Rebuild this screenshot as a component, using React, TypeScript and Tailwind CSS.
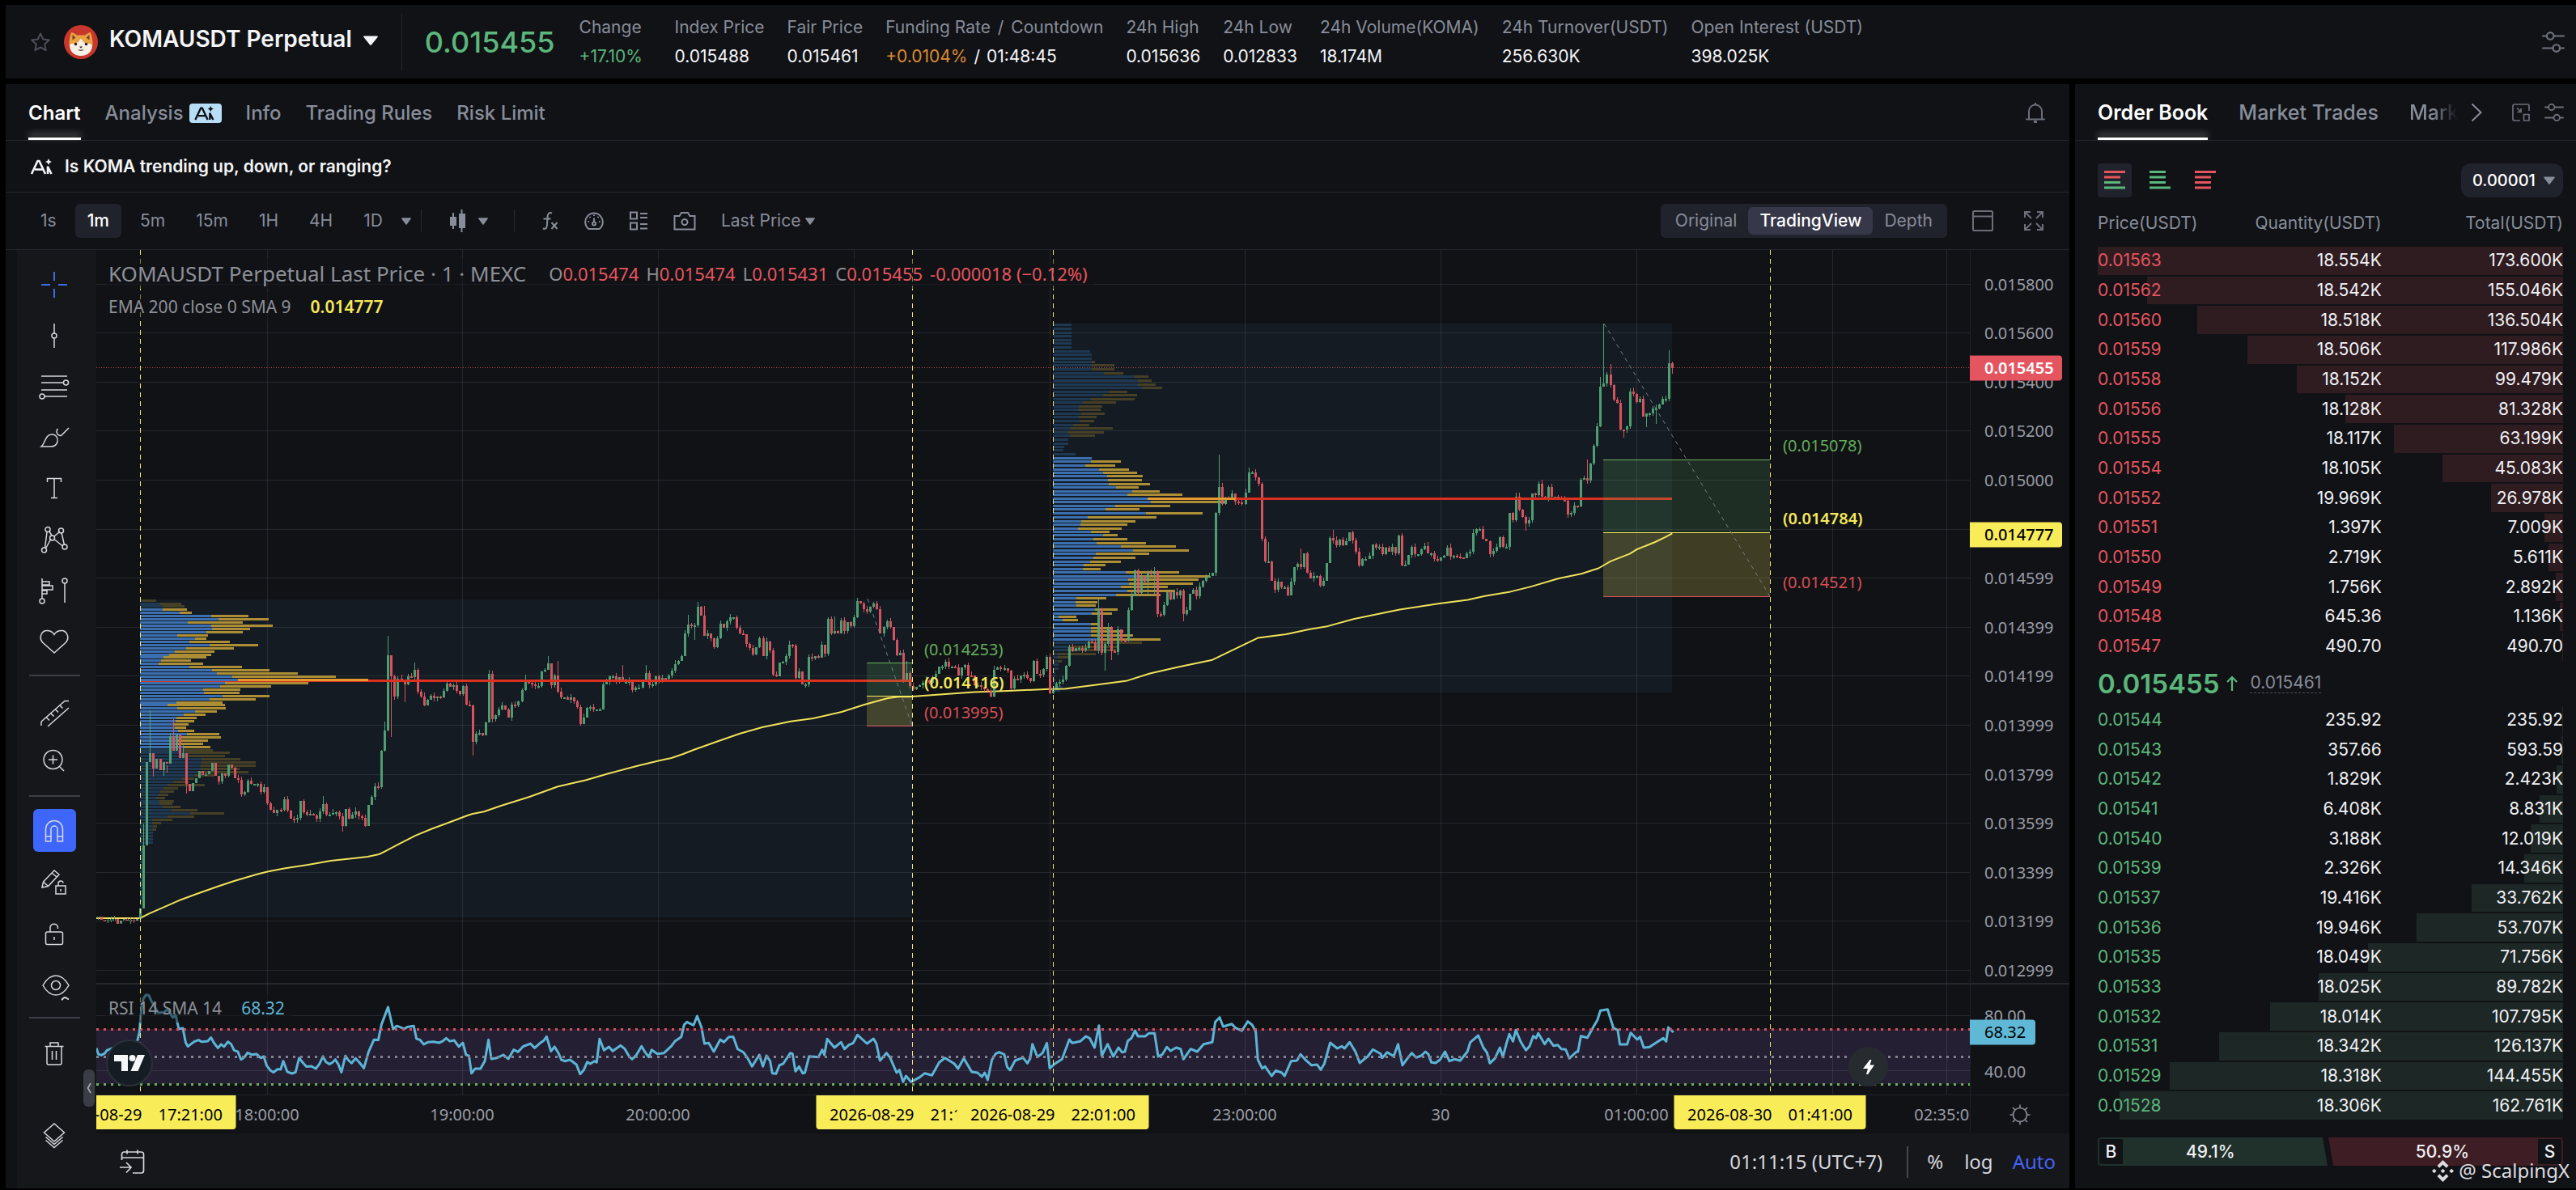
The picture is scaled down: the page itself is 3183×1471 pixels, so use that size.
import React from "react";

/* ------------------------------------------------------------------ */
/* Chart geometry                                                      */
/* ------------------------------------------------------------------ */

const VIEW = { x: 119, y: 309, w: 2315, h: 1044 };
const leftPct = (x: number) => `${((x - VIEW.x) / VIEW.w) * 100}%`;
const topPct = (y: number) => `${((y - VIEW.y) / VIEW.h) * 100}%`;

type Pt = [number, number];

/** Turns a flat list of pane units into chart points. */
const series = (ox: number, oy: number, sx: number, sy: number, flat: number[]): Pt[] => {
  const out: Pt[] = [];
  for (let i = 0; i < flat.length; i += 2) out.push([ox + flat[i] / sx, oy + flat[i + 1] / sy]);
  return out;
};

const SX = 1.4255;

const closes: Pt[] = [
  ...series(100, 700, SX, 3, [
    27, 1300, 33, 1312, 39, 1315, 45, 1310, 51, 1309, 57, 1308, 62, 1309, 65, 1325, 69, 1315, 75, 1308, 80, 1312, 86, 1312, 92, 1315, 98, 1308,
    104, 1270, 110, 1034, 116, 726, 122, 693, 128, 750, 133, 714, 139, 757, 145, 727, 151, 732, 157, 630, 162, 683, 168, 625, 174, 710, 180, 694,
    185, 806, 191, 833, 197, 804, 203, 786, 209, 760, 215, 773, 220, 770, 226, 760, 231, 730, 237, 778, 243, 797, 249, 768, 255, 778, 261, 735,
    267, 748, 270, 785, 276, 793, 282, 845, 288, 836, 294, 796, 300, 808, 306, 808, 312, 808, 318, 836, 324, 820, 330, 880, 336, 904, 341, 915,
    347, 902, 353, 903, 359, 865, 365, 906, 371, 935, 376, 938, 382, 932, 387, 870, 393, 912, 399, 922, 405, 918, 411, 925, 417, 937, 422, 910,
    427, 882, 433, 922, 439, 922, 445, 915, 451, 912, 456, 928, 462, 962, 468, 900, 474, 937, 479, 922, 485, 909, 491, 928, 497, 934, 503, 962,
    508, 885, 514, 855, 519, 815, 525, 818, 531, 683, 537, 610, 542, 330, 548, 408, 553, 482, 559, 417, 565, 422, 571, 438, 577, 407, 582, 410,
    588, 384, 593, 465, 599, 483, 605, 515, 611, 495, 617, 480, 622, 490, 628, 484, 634, 485, 640, 462, 645, 435, 651, 447, 657, 442, 663, 462,
    669, 474, 675, 445, 680, 513, 686, 515, 692, 650, 698, 620, 704, 618, 710, 626, 715, 580, 721, 400, 726, 566, 732, 552, 738, 530, 743, 517,
    749, 531, 755, 560, 761, 514, 767, 515, 773, 500, 778, 460, 784, 430, 790, 432, 796, 438, 802, 445, 808, 420, 812, 390, 818, 385, 823, 360,
    829, 440, 835, 405, 841, 465, 846, 487, 852, 487, 858, 495, 864, 487, 870, 500, 875, 522, 881, 584, 887, 560, 893, 525, 899, 522, 905, 530,
    911, 530, 917, 370, 922, 438, 928, 430, 934, 408, 940, 430, 946, 410, 951, 400, 957, 428, 963, 425, 969, 458, 974, 472, 980, 450, 986, 428,
    992, 397, 998, 440, 1004, 437, 1009, 408, 1015, 430, 1021, 415, 1030, 418, 1036, 404, 1041, 388, 1047, 362, 1053, 350, 1058, 333, 1064, 248,
    1070, 216, 1075, 222, 1081, 220, 1087, 150, 1093, 182, 1098, 257, 1104, 250, 1110, 268, 1116, 299, 1122, 268, 1127, 214, 1133, 228, 1139, 205,
    1145, 190, 1150, 188, 1156, 228, 1162, 250, 1168, 253, 1174, 288, 1180, 302, 1185, 326, 1191, 300, 1197, 267, 1202, 334, 1208, 278, 1214, 311,
    1220, 402, 1226, 407, 1231, 358, 1237, 355, 1243, 333, 1249, 290, 1255, 295, 1260, 415, 1266, 390, 1272, 437, 1278, 437, 1284, 337, 1289, 343,
    1295, 334, 1301, 340, 1307, 292, 1313, 323, 1318, 195, 1324, 248, 1330, 240, 1335, 248, 1341, 200, 1347, 240, 1352, 208, 1358, 222, 1363, 190,
    1369, 130, 1375, 138, 1381, 160, 1386, 167, 1392, 150, 1398, 138, 1404, 160, 1409, 250, 1415, 225, 1421, 204, 1427, 225, 1433, 272, 1438, 330,
    1444, 322, 1450, 420, 1456, 397, 1460, 445,
  ]),
  ...series(1000, 380, SX, 2.8, [
    181, 1322, 187, 1312, 193, 1308, 199, 1300, 205, 1290, 211, 1298, 217, 1280, 223, 1268, 229, 1243, 235, 1243, 241, 1226, 247, 1244, 253, 1244,
    258, 1246, 264, 1274, 270, 1245, 276, 1238, 282, 1274, 288, 1275, 294, 1307, 300, 1314, 306, 1322, 312, 1328, 318, 1346, 322, 1296, 328, 1255,
    334, 1246, 340, 1248, 346, 1258, 352, 1320, 358, 1322, 362, 1285, 368, 1288, 374, 1275, 380, 1270, 385, 1281, 391, 1294, 397, 1224, 402, 1268,
    408, 1270, 414, 1252, 420, 1210, 425, 1335, 430, 1320, 436, 1302, 442, 1297, 448, 1288, 454, 1240, 460, 1175, 466, 1190, 472, 1178, 478, 1186,
    484, 1178, 490, 1155, 496, 1158, 500, 1192, 506, 1188, 510, 1042, 516, 1195, 522, 1165, 528, 1105, 534, 1190, 539, 1192, 545, 1115, 551, 1150,
    557, 1153, 563, 1048, 568, 1000, 573, 910, 579, 988, 585, 930, 591, 950, 597, 915, 603, 925, 609, 912, 614, 1060, 620, 1063, 626, 1030, 632, 985,
    638, 1012, 644, 985, 650, 998, 655, 980, 660, 1061, 666, 1047, 672, 990, 678, 976, 684, 1000, 690, 965, 695, 947, 701, 932, 707, 930, 713, 918,
    717, 712, 723, 622, 729, 680, 735, 658, 741, 663, 747, 645, 753, 672, 758, 675, 764, 680, 769, 640, 774, 572, 780, 572, 786, 588, 790, 610,
    794, 802, 800, 880, 806, 880, 811, 945, 817, 978, 823, 948, 829, 968, 835, 968, 840, 996, 846, 948, 851, 900, 857, 888, 863, 900, 869, 850,
    875, 918, 880, 920, 884, 937, 890, 930, 896, 930, 902, 962, 907, 945, 912, 885, 918, 798, 924, 807, 930, 823, 936, 803, 942, 822, 947, 808,
    952, 778, 958, 806, 964, 845, 970, 892, 975, 870, 981, 870, 987, 860, 993, 820, 999, 832, 1005, 830, 1010, 855, 1016, 832, 1022, 845, 1028, 830,
    1034, 850, 1040, 790, 1045, 892, 1051, 890, 1057, 858, 1063, 830, 1069, 855, 1075, 830, 1080, 838, 1086, 825, 1092, 850, 1098, 870, 1104, 875,
    1110, 865, 1115, 860, 1121, 832, 1127, 862, 1133, 860, 1139, 862, 1145, 866, 1150, 868, 1156, 850, 1162, 845, 1166, 790, 1172, 782, 1178, 768,
    1184, 770, 1189, 800, 1195, 810, 1200, 853, 1206, 842, 1212, 830, 1218, 796, 1224, 830, 1230, 795, 1235, 712, 1240, 735, 1246, 655, 1252, 700,
    1257, 725, 1263, 747, 1269, 735, 1275, 645, 1281, 650, 1287, 610, 1293, 655, 1298, 660, 1304, 622, 1310, 655, 1316, 660, 1322, 665, 1328, 668,
    1333, 675, 1338, 716, 1344, 712, 1350, 686, 1356, 690, 1360, 595, 1366, 590, 1372, 598, 1378, 540, 1384, 480, 1390, 412, 1395, 275, 1401, 262,
    1407, 232, 1412, 268, 1418, 318, 1424, 330, 1430, 422, 1436, 424, 1441, 412, 1447, 290, 1453, 300, 1459, 328, 1464, 315, 1470, 378, 1476, 368,
    1482, 368, 1488, 350, 1494, 335, 1500, 315, 1506, 300, 1510, 315, 1515, 193, 1520, 210,
  ]),
];

/* Long wicks: each pair is a time position and the extreme that it reached. */
const extremes: Pt[] = [
  ...series(100, 700, SX, 3, [
    110, 955, 122, 535, 128, 780, 145, 778, 157, 618, 151, 765, 162, 568, 180, 655, 185, 842, 376, 950, 427, 852, 462, 983, 537, 577, 531, 728,
    542, 258, 548, 632, 553, 493, 571, 505, 588, 358, 692, 702, 721, 383, 784, 402, 823, 333, 841, 350, 881, 590, 957, 367, 992, 367, 1070, 180,
    1081, 272, 1087, 132, 1098, 148, 1145, 178, 1330, 185, 1456, 350,
  ]),
  ...series(1000, 380, SX, 2.8, [
    318, 1350, 510, 1012, 522, 1257, 534, 1222, 579, 992, 597, 998, 609, 998, 660, 1085, 723, 510, 774, 553, 786, 566, 806, 812, 863, 833, 924, 770,
    1246, 640, 1263, 772, 1372, 525, 1395, 240, 1401, 56, 1412, 197, 1436, 450, 1476, 415, 1492, 403, 1515, 147, 1520, 230,
  ]),
];

const STEP = 4.027;

type Candle = { x: number; open: number; close: number; high: number; low: number };

const candles: Candle[] = (() => {
  const out: Candle[] = [];
  let k = 0;
  let prev = closes[0][1];
  for (let i = -52; ; i++) {
    const x = 330.4 + i * STEP;
    if (x > 2068) break;
    while (k < closes.length - 1 && Math.abs(closes[k + 1][0] - x) <= Math.abs(closes[k][0] - x)) k++;
    const close = closes[k][1];
    const wickUp = ((i * 37 + 400) % 7) * 0.8;
    const wickDown = ((i * 53 + 800) % 6) * 0.8;
    let high = Math.min(prev, close) - wickUp;
    let low = Math.max(prev, close) + wickDown;
    for (const [ex, ey] of extremes) {
      if (Math.abs(ex - x) < STEP / 2) {
        if (ey < high) high = ey;
        if (ey > low) low = ey;
      }
    }
    out.push({ x, open: prev, close, high, low });
    prev = close;
  }
  return out;
})();

const candlePath = (up: boolean) =>
  candles
    .filter((c) => c.close <= c.open === up)
    .map((c) => {
      const x = Math.round(c.x);
      const t = Math.round(Math.min(c.open, c.close));
      const b = Math.max(t + 2, Math.round(Math.max(c.open, c.close)));
      const h = Math.round(c.high);
      const l = Math.round(c.low);
      return `M${x - 1} ${t}h3V${b}h-3zM${x} ${h}h1V${l}h-1z`;
    })
    .join("");

const ema: Pt[] = [
  ...series(100, 700, SX, 3, [
    27, 1305, 104, 1305, 120, 1288, 172, 1240, 200, 1218, 240, 1188, 270, 1167, 310, 1142, 330, 1132, 360, 1120, 400, 1107, 440, 1092, 480, 1083,
    505, 1077, 525, 1068, 535, 1058, 560, 1030, 590, 998, 620, 972, 650, 949, 680, 925, 690, 918, 710, 910, 740, 888, 790, 855, 840, 817, 890, 793,
    930, 768, 980, 740, 1020, 720, 1040, 711, 1060, 697, 1080, 680, 1120, 650, 1160, 621, 1200, 597, 1250, 575, 1290, 564, 1340, 540, 1380, 513,
    1420, 490, 1440, 484, 1460, 484,
  ]),
  ...series(1000, 380, SX, 2.8, [
    181, 1347, 230, 1340, 290, 1331, 350, 1327, 423, 1321, 450, 1320, 500, 1308, 560, 1292, 600, 1267, 650, 1245, 710, 1220, 750, 1182, 790, 1144,
    840, 1131, 880, 1114, 910, 1105, 960, 1078, 1040, 1046, 1110, 1025, 1160, 1012, 1190, 999, 1235, 984, 1270, 967, 1320, 938, 1360, 922, 1390, 903,
    1412, 878, 1445, 853, 1457, 838, 1490, 812, 1508, 795, 1520, 782,
  ]),
];

const rsi: Pt[] = [
  ...series(0, 880, 2.24, 2.653, [
    267, 1103, 272, 1122, 280, 1126, 290, 1120, 296, 1110, 310, 1103, 340, 1095, 380, 1080, 386, 1050, 390, 990, 397, 940, 404, 928, 412, 930,
    420, 950, 430, 972, 438, 987, 455, 985, 463, 975, 470, 985, 478, 1002, 486, 995, 495, 1040, 506, 1037, 514, 1085, 520, 1097, 530, 1088, 540, 1080,
    550, 1076, 558, 1082, 575, 1080, 584, 1068, 592, 1085, 603, 1102, 612, 1090, 620, 1098, 631, 1082, 640, 1090, 648, 1110, 658, 1114, 667, 1140,
    677, 1132, 685, 1118, 697, 1124, 710, 1122, 722, 1135, 730, 1130, 738, 1160, 748, 1175, 757, 1182, 768, 1172, 777, 1172, 784, 1145, 795, 1180,
    808, 1186, 818, 1182, 828, 1135, 838, 1150, 848, 1163, 862, 1162, 874, 1170, 884, 1155, 894, 1130, 902, 1148, 912, 1155, 920, 1150, 928, 1140,
    936, 1155, 945, 1182, 956, 1128, 964, 1142, 973, 1152, 984, 1136, 995, 1150, 1007, 1168, 1020, 1115, 1035, 1075, 1047, 1076, 1056, 1025,
    1074, 968, 1088, 1040, 1098, 1030, 1110, 1035, 1118, 1040, 1128, 1033, 1145, 1030, 1153, 1072, 1162, 1075, 1173, 1090, 1185, 1083, 1200, 1082,
    1215, 1085, 1225, 1080, 1235, 1070, 1245, 1080, 1257, 1077, 1270, 1098, 1281, 1085, 1290, 1125, 1298, 1128, 1305, 1185, 1315, 1170, 1330, 1170,
    1342, 1145, 1352, 1075, 1360, 1138, 1375, 1135, 1393, 1125, 1407, 1138, 1422, 1108, 1434, 1115, 1448, 1097, 1468, 1088, 1480, 1102, 1495, 1086,
    1505, 1078, 1513, 1065, 1525, 1113, 1535, 1098,
  ]),
  ...series(690, 1200, 1.12, 3, [
    0, 305, 4, 330, 9, 335, 16, 330, 25, 348, 30, 383, 35, 368, 40, 338, 44, 345, 50, 335, 53, 340, 57, 253, 63, 295, 70, 282, 75, 298, 86, 277,
    92, 290, 98, 318, 102, 328, 108, 312, 115, 280, 120, 302, 125, 320, 129, 293, 137, 308, 146, 305, 156, 280, 161, 262, 170, 245, 174, 200,
    178, 190, 187, 202, 192, 168, 198, 210, 202, 270, 208, 268, 215, 300, 224, 255, 229, 265, 236, 245, 242, 245, 248, 290, 256, 302, 262, 325,
    268, 355, 278, 312, 283, 355, 288, 315, 293, 335, 296, 380, 301, 382, 306, 350, 311, 345, 321, 305, 324, 308, 328, 373, 333, 355, 338, 380,
    341, 378, 347, 317, 360, 320, 365, 293, 368, 312, 372, 253, 382, 285, 391, 265, 396, 290, 402, 275, 408, 268, 414, 238, 427, 270, 436, 252,
    440, 270, 445, 333, 454, 305, 459, 322, 468, 378, 472, 368, 477, 412, 481, 390, 488, 412, 500, 395, 507, 380, 517, 388, 527, 340, 535, 323,
    548, 345, 553, 363, 561, 325, 572, 375, 580, 378, 586, 393, 590, 378, 594, 405, 600, 330, 605, 308, 610, 302, 617, 310, 621, 357, 625, 368,
    632, 333, 643, 322, 649, 343, 653, 325, 656, 272, 663, 320, 670, 305, 676, 268, 680, 362, 687, 345, 697, 328, 707, 255, 711, 268, 722, 262,
    730, 243, 735, 250, 742, 285, 748, 203, 752, 315, 760, 272, 768, 318, 775, 285, 780, 302, 784, 300, 788, 260, 793, 250, 798, 222, 802, 243,
    812, 243, 817, 232, 825, 232, 830, 318, 836, 310, 842, 283, 847, 297, 855, 285, 861, 290, 865, 328, 875, 290, 884, 300, 893, 272, 905, 265,
    909, 190, 915, 173, 920, 207, 932, 197, 937, 212, 946, 222, 954, 188, 960, 200, 965, 225, 968, 330, 974, 362, 978, 355, 987, 390, 993, 370,
    1001, 378, 1005, 390, 1014, 335, 1022, 333, 1027, 310, 1033, 328, 1042, 350, 1050, 348, 1055, 367, 1060, 345, 1068, 267, 1078, 288, 1084, 280,
    1088, 288, 1095, 265, 1103, 300, 1109, 342, 1115, 328, 1120, 318, 1127, 292, 1138, 308, 1140, 323, 1147, 302, 1156, 317, 1162, 272, 1168, 350,
    1175, 325, 1181, 305, 1187, 322, 1194, 315, 1200, 300, 1204, 310, 1208, 340, 1214, 342, 1220, 330, 1227, 300, 1233, 335, 1240, 328, 1248, 333,
    1258, 300, 1262, 265, 1273, 240, 1280, 285, 1285, 303, 1289, 343, 1296, 325, 1303, 285, 1307, 320, 1312, 270, 1316, 235, 1321, 262, 1325, 220,
    1332, 265, 1339, 295, 1344, 280, 1349, 242, 1353, 250, 1356, 232, 1365, 272, 1370, 252, 1377, 278, 1383, 275, 1388, 290, 1394, 292, 1399, 325,
    1409, 300, 1411, 300, 1415, 242, 1424, 248, 1433, 205, 1438, 182, 1442, 148, 1452, 143, 1460, 212, 1466, 220, 1469, 273, 1479, 273, 1484, 230,
    1493, 255, 1497, 245, 1502, 285, 1510, 283, 1522, 262, 1529, 250, 1533, 262, 1536, 210, 1543, 228,
  ]),
];

const toPoints = (pts: Pt[]) => pts.map(([x, y]) => `${x.toFixed(1)},${y.toFixed(1)}`).join(" ");

/* Volume profile rows: [row, end of the buy part, end of the sell part]. */
type Row = [number, number, number];

const rowsOf = (flat: number[]): Row[] => {
  const out: Row[] = [];
  for (let i = 0; i < flat.length; i += 3) out.push([flat[i], flat[i + 1], flat[i + 2]]);
  return out;
};

const profileA = rowsOf([
  127, 108, 133, 138, 138, 177, 148, 144, 182, 160, 144, 187, 172, 174, 195, 184, 229, 295, 196, 242, 331, 208, 188, 285, 220, 229, 338,
  232, 231, 298, 244, 221, 285, 256, 170, 224, 268, 201, 221, 280, 191, 262, 292, 227, 312, 304, 185, 269, 316, 165, 235, 327, 155, 229,
  337, 145, 221, 349, 141, 194, 361, 137, 215, 373, 191, 284, 385, 231, 332, 397, 239, 382, 409, 267, 449, 421, 277, 506, 433, 254, 401,
  445, 245, 335, 457, 215, 281, 469, 217, 279, 481, 249, 332, 493, 227, 308, 504, 168, 249, 514, 153, 254, 526, 170, 255, 538, 201, 239,
  550, 181, 220, 562, 168, 204, 574, 167, 200, 586, 162, 190, 598, 165, 185, 610, 171, 200, 622, 187, 244, 634, 174, 247, 646, 168, 224,
  658, 168, 215, 670, 180, 228, 682, 180, 232, 691, 185, 262, 703, 190, 254, 715, 213, 281, 727, 213, 308, 739, 211, 308, 751, 211, 279,
  763, 205, 295, 775, 200, 235, 787, 178, 200, 799, 163, 190, 811, 153, 218, 823, 146, 171, 835, 140, 164, 847, 137, 154, 859, 133, 148,
  870, 138, 164, 880, 138, 161, 892, 144, 175, 904, 160, 205, 916, 192, 252, 928, 153, 200, 940, 126, 161, 952, 126, 141, 964, 127, 134,
  976, 126, 133, 988, 127, 127, 1000, 127, 127, 1012, 127, 127, 1024, 127, 127, 1036, 109, 109, 1048, 109, 109, 1060, 109, 109, 1072, 109, 109,
  1084, 109, 109, 1096, 109, 109, 1108, 109, 109, 1120, 109, 109, 1132, 109, 109, 1144, 109, 109, 1156, 109, 109, 1168, 109, 109, 1180, 109, 109,
  1192, 109, 109, 1204, 109, 109, 1216, 109, 109, 1228, 109, 109, 1240, 109, 109,
]);

const profileB = rowsOf([
  60, 462, 462, 73, 462, 462, 86, 462, 462, 98, 462, 462, 111, 462, 462, 124, 462, 462, 137, 462, 462, 150, 495, 495, 162, 497, 497,
  175, 497, 497, 187, 497, 503, 200, 497, 537, 213, 497, 537, 226, 519, 553, 239, 573, 597, 252, 579, 603, 265, 579, 610, 277, 586, 621,
  290, 527, 560, 302, 517, 577, 315, 496, 573, 328, 482, 540, 341, 475, 516, 353, 473, 513, 366, 479, 520, 379, 475, 506, 392, 476, 502,
  405, 465, 493, 417, 459, 535, 431, 455, 519, 443, 459, 503, 456, 456, 456, 469, 456, 456, 482, 449, 449, 494, 448, 448, 506, 469, 469,
  520, 497, 497, 533, 496, 549, 546, 486, 539, 559, 510, 563, 571, 517, 577, 583, 525, 587, 596, 526, 586, 609, 527, 600, 621, 540, 580,
  635, 569, 617, 648, 560, 657, 660, 596, 751, 673, 602, 735, 686, 539, 636, 698, 522, 582, 711, 593, 693, 725, 490, 612, 738, 479, 574,
  750, 478, 560, 763, 473, 550, 775, 496, 529, 788, 517, 543, 800, 500, 560, 814, 506, 593, 827, 549, 646, 840, 570, 669, 852, 505, 599,
  865, 500, 574, 878, 495, 549, 890, 483, 522, 903, 482, 513, 915, 557, 651, 930, 577, 706, 942, 562, 686, 954, 563, 676, 967, 549, 631,
  980, 560, 644, 993, 540, 619, 1006, 470, 523, 1019, 469, 507, 1031, 470, 505, 1044, 503, 543, 1057, 497, 533, 1069, 439, 470, 1082, 446, 473,
  1094, 496, 510, 1108, 496, 531, 1121, 496, 553, 1133, 496, 570, 1147, 510, 619, 1159, 490, 586, 1172, 456, 545, 1185, 453, 540,
  1197, 438, 505, 1210, 438, 457, 1223, 438, 445, 1236, 439, 439, 1249, 439, 439, 1262, 433, 433, 1275, 434, 434, 1288, 434, 434,
  1300, 434, 434, 1313, 446, 446, 1325, 442, 442,
]);

function Profile(props: { rows: Row[]; ox: number; oy: number; sy: number; from: number; valueArea: [number, number] }) {
  const { rows, ox, oy, sy, from, valueArea } = props;
  const start = Math.round(ox + from / SX);
  return (
    <g shapeRendering="crispEdges">
      {rows.map(([r, buy, sell]) => {
        const inside = r >= valueArea[0] && r <= valueArea[1];
        const y = Math.round(oy + r / sy) - 1;
        const b = Math.round(ox + buy / SX);
        const s = Math.round(ox + sell / SX);
        return (
          <g key={r}>
            <rect x={start} y={y} width={b - start} height={3} fill={inside ? "#3b6fb0" : "#1e3852"} />
            {s > b && <rect x={b} y={y} width={s - b} height={3} fill={inside ? "#ad8e35" : "#453f26"} />}
          </g>
        );
      })}
    </g>
  );
}

const gridY = Array.from({ length: 15 }, (_, i) => 350.5 + i * 60.6);
const gridX = [330, 571, 813, 1055, 1297, 1538, 1780, 2022, 2264, 2405];
const marks = [173, 1127, 1301, 2187];

function ChartDrawing() {
  return (
    <svg className="absolute inset-0 h-full w-full" viewBox="119 309 2315 1044" preserveAspectRatio="none" aria-hidden="true">
      <rect x="119" y="1272" width="2315" height="68" fill="#251f34" />
      <rect x="173" y="741" width="954" height="393" fill="#141b22" />
      <rect x="1301" y="400" width="765" height="456" fill="#141b22" />
      <g shapeRendering="crispEdges" fill="#9aa4b8" fillOpacity="0.15">
        {gridY.map((y) => (
          <rect key={y} x="119" y={Math.round(y)} width="2315" height="1" />
        ))}
        {gridX.map((x) => (
          <rect key={x} x={x} y="309" width="1" height="1044" />
        ))}
        <rect x="119" y="1255" width="2315" height="1" />
        <rect x="119" y="1323" width="2315" height="1" />
        <rect x="119" y="1215" width="2315" height="2" />
      </g>
      <line x1="119" x2="2434" y1="454.5" y2="454.5" stroke="#e5555f" strokeOpacity="0.8" strokeDasharray="1 2" />
      <Profile rows={profileA} ox={100} oy={700} sy={3} from={104} valueArea={[155, 675]} />
      <Profile rows={profileB} ox={1000} oy={380} sy={2.8} from={429} valueArea={[515, 1150]} />
      <polyline points={toPoints(ema)} fill="none" stroke="#efe15a" strokeWidth="2" strokeLinejoin="round" />
      <g shapeRendering="crispEdges">
        <path d={candlePath(true)} fill="#52a578" fillOpacity="0.95" />
        <path d={candlePath(false)} fill="#de5663" fillOpacity="0.95" />
      </g>
      <g shapeRendering="crispEdges" fill="#dc3120">
        <rect x="455" y="840" width="672" height="3" />
        <rect x="173" y="842" width="282" height="1" />
        <rect x="1527" y="615" width="539" height="3" />
      </g>
      <g shapeRendering="crispEdges" fill="#e49a2c">
        <rect x="294" y="839" width="161" height="3" />
        <rect x="1418" y="615" width="109" height="3" />
      </g>
      <g shapeRendering="crispEdges">
        <rect x="1071" y="819" width="56" height="42" fill="#64b464" fillOpacity="0.18" />
        <rect x="1071" y="861" width="56" height="36" fill="#f9ec59" fillOpacity="0.2" />
        <rect x="1071" y="819" width="56" height="1" fill="#69b05c" />
        <rect x="1071" y="860" width="56" height="1" fill="#f9ec59" />
        <rect x="1071" y="897" width="56" height="1" fill="#d94f55" />
        <rect x="1981" y="568" width="206" height="90" fill="#64b464" fillOpacity="0.18" />
        <rect x="1981" y="658" width="206" height="79" fill="#f9ec59" fillOpacity="0.2" />
        <rect x="1981" y="568" width="206" height="1" fill="#69b05c" />
        <rect x="1981" y="658" width="206" height="1" fill="#f9ec59" />
        <rect x="1981" y="737" width="206" height="1" fill="#d94f55" />
      </g>
      <g stroke="#787b86" strokeDasharray="5 5" fill="none">
        <line x1="1072" y1="740" x2="1127" y2="897" />
        <line x1="1982" y1="400" x2="2187" y2="737" />
      </g>
      <polyline points={toPoints(rsi)} fill="none" stroke="#5cb5d6" strokeWidth="3" strokeLinejoin="round" />
      <g strokeWidth="3" strokeDasharray="3 6">
        <line x1="119" x2="2434" y1="1272.5" y2="1272.5" stroke="#de4f55" />
        <line x1="119" x2="2434" y1="1306.5" y2="1306.5" stroke="#85838f" />
        <line x1="119" x2="2434" y1="1340.5" y2="1340.5" stroke="#6cb05a" />
      </g>
      <g stroke="#f3ea72" strokeDasharray="6 5" shapeRendering="crispEdges">
        {marks.map((x) => (
          <line key={x} x1={x + 0.5} x2={x + 0.5} y1="309" y2="1353" />
        ))}
      </g>
    </svg>
  );
}

/* ------------------------------------------------------------------ */
/* Icons                                                               */
/* ------------------------------------------------------------------ */

const Caret = ({ className = "" }: { className?: string }) => (
  <svg className={className} viewBox="0 0 12 8" preserveAspectRatio="none" fill="currentColor" aria-hidden="true">
    <path d="M.8.3h10.4c.6 0 .9.6.5 1.1L6.6 7.6c-.3.4-.9.4-1.2 0L.3 1.4C-.1.9.2.3.8.3z" />
  </svg>
);

const AiMark = ({ className = "" }: { className?: string }) => (
  <svg className={className} viewBox="0 0 30 20" fill="none" stroke="currentColor" strokeWidth="2.6" aria-hidden="true">
    <path d="M1.5 19 9 3h2l7.5 16M5.5 13.5h9.5" />
    <path d="M21.5 9.5V19M21.500 10 26 19" />
    <path d="M22.5 0l1.3 2.700L26.500 4l-2.700 1.300-1.300 2.700-1.300-2.700L18.500 4l2.700-1.300z" fill="currentColor" stroke="none" />
  </svg>
);

const Sliders = ({ className = "" }: { className?: string }) => (
  <svg className={className} viewBox="0 0 26 26" fill="none" stroke="currentColor" strokeWidth="2" strokeLinecap="round" aria-hidden="true">
    <path d="M1 6h4M14 6h11M1 20h11M21 20h4" />
    <circle cx="9.5" cy="6" r="4" />
    <circle cx="16.5" cy="20" r="4" />
  </svg>
);

const Star = () => (
  <svg className="h-7 w-7" viewBox="0 0 28 28" fill="none" stroke="#4b4e57" strokeWidth="2" strokeLinejoin="round" aria-hidden="true">
    <path d="M14 3.500l3.200 7 7.600.9-5.600 5.200 1.500 7.600L14 20.500l-6.700 3.700 1.500-7.600-5.600-5.200 7.600-.9z" />
  </svg>
);

const CoinLogo = () => (
  <svg className="h-[42px] w-[42px]" viewBox="0 0 42 42" aria-hidden="true">
    <circle cx="21" cy="21" r="21" fill="#c8372d" />
    <path d="M9 9c3 .5 5 2 7 3.500h10c2-1.500 4-3 7-3.500 1.500 5 2.500 9 2.500 14 0 8-6 13-14.500 13S6.500 31 6.500 23C6.500 18 7.500 14 9 9z" fill="#e9a243" />
    <path d="M10.500 12l4 3.500-4 3zM31.500 12l-4 3.500 4 3z" fill="#7b3f22" />
    <path d="M21 17c1.500 0 2 4 5 5s6 0 8.500 2c1.500 8-5 14-13.500 14S6 32 7.500 24c2.500-2 5.500-1 8.500-2s3.500-5 5-5z" fill="#f6efe6" />
    <circle cx="14.5" cy="23.5" r="1.8" fill="#2b1a14" />
    <circle cx="27.5" cy="23.5" r="1.8" fill="#2b1a14" />
    <path d="M19 26.500h4l-2 2.200z" fill="#2b1a14" />
    <path d="M18 30.500c1.500 1 4.500 1 6 0" fill="none" stroke="#2b1a14" />
  </svg>
);

const Bell = () => (
  <svg className="h-7 w-7" viewBox="0 0 28 28" fill="none" stroke="#6b6f79" strokeWidth="2" aria-hidden="true">
    <path d="M6 22V12.500a8 8 0 0 1 16 0V22M3 22.500h22" strokeLinecap="round" />
    <path d="M12 25.500h4" strokeWidth="3" />
    <path d="M14 2v3" />
  </svg>
);

const stroke = { fill: "none", stroke: "currentColor", strokeWidth: 2 } as const;

const CandlesIcon = () => (
  <svg className="h-7 w-[22px]" viewBox="0 0 22 28" fill="currentColor" aria-hidden="true">
    <path d="M4 4h2v5h3v11H6v4H4v-4H1V9h3zM14.500 0h2v5H20v18h-3.500v5h-2v-5H12V5h2.500z" />
  </svg>
);

const FxIcon = () => (
  <svg className="h-6 w-6" viewBox="0 0 24 24" {...stroke} aria-hidden="true">
    <path d="M15 2.500c-3.500-1.500-5 .5-5.300 4L8.800 18c-.3 3.500-2 4.500-5 3.500M4.500 9.500h9M14.500 14l7 8M21.500 14l-7 8" />
  </svg>
);

const GaugeIcon = () => (
  <svg className="h-6 w-6" viewBox="0 0 24 24" {...stroke} aria-hidden="true">
    <path d="M5.500 22a10.800 10.800 0 1 1 13 0z" />
    <circle cx="12" cy="15.5" r="2" />
    <path d="M12 13V8.500M12 4.500v1.500M6.500 7l1 1M17.500 7l-1 1M4.500 13H6M18 13h1.500" />
  </svg>
);

const ListIcon = () => (
  <svg className="h-6 w-6" viewBox="0 0 24 24" {...stroke} aria-hidden="true">
    <path d="M2 1.500h8v8H2zM2 14.500h8v8H2zM14 3h9M14 8h9M14 16h9M14 21.500h9" />
  </svg>
);

const CameraIcon = () => (
  <svg className="h-6 w-7" viewBox="0 0 28 24" {...stroke} aria-hidden="true">
    <path d="M1.500 6h6L10 2h8l2.500 4h6v16.500h-25z" />
    <circle cx="14" cy="13.5" r="3.5" />
  </svg>
);

const WindowIcon = () => (
  <svg className="h-7 w-7" viewBox="0 0 28 28" {...stroke} aria-hidden="true">
    <rect x="2" y="2" width="24" height="24" rx="1.5" />
    <path d="M2 8.500h24" />
  </svg>
);

const ExpandIcon = () => (
  <svg className="h-[26px] w-[26px]" viewBox="0 0 26 26" {...stroke} aria-hidden="true">
    <path d="M2 9V2h7M2 2l8 8M17 2h7v7M24 2l-8 8M2 17v7h7M2 24l8-8M24 17v7h-7M24 24l-8-8" />
  </svg>
);

const toolStroke = { fill: "none", stroke: "currentColor", strokeWidth: 1.5, viewBox: "0 0 40 40", className: "h-10 w-10", "aria-hidden": true } as const;

const CrossIcon = () => (
  <svg {...toolStroke} stroke="#3f6be0" strokeWidth={2}>
    <path d="M20 4v11M20 25v11M4 20h11M25 20h11" />
  </svg>
);
const LineIcon = () => (
  <svg {...toolStroke}>
    <path d="M20 5v12M20 23v12" />
    <circle cx="20" cy="20" r="3" />
  </svg>
);
const FibIcon = () => (
  <svg {...toolStroke}>
    <path d="M4 7h32M4 15h28M4 24h32M8 32h28" />
    <circle cx="34.5" cy="15" r="3" />
    <circle cx="5" cy="32" r="3" />
  </svg>
);
const BrushIcon = () => (
  <svg {...toolStroke}>
    <path d="M4 31c5-4 5-15 13-15 5 0 8 4 7 9-1 4-4 6-8 6zM24.500 9c-3 3-1 9 4 8.500L38 8" />
  </svg>
);
const TextIcon = () => (
  <svg {...toolStroke}>
    <path d="M11.500 12V7.500h17V12M20 7.500v24M16 31.500h8" />
  </svg>
);
const PatternIcon = () => (
  <svg {...toolStroke}>
    <path d="M11 11 8.500 30M10 30l6-11M14 10l3 5M20 16l7-6M20.500 20l10 8M29 11l3.500 16" />
    <circle cx="12" cy="7.5" r="3" />
    <circle cx="17.5" cy="18" r="3" />
    <circle cx="28.5" cy="9" r="3" />
    <circle cx="33" cy="29" r="3" />
    <circle cx="7.5" cy="33" r="3" />
  </svg>
);
const ForecastIcon = () => (
  <svg {...toolStroke}>
    <path d="M5 5v25M5 9h9v4H5M5 14h13v5H5M5 20h6v4H5M33 11v24" />
    <circle cx="5" cy="33" r="3" />
    <circle cx="33" cy="8" r="3" />
  </svg>
);
const HeartIcon = () => (
  <svg {...toolStroke}>
    <path d="M20 34 5.500 21c-5-6-1-14.500 5.500-14.500 4 0 7 1.500 9 5 2-3.500 5-5 9-5 6.500 0 10.500 8.500 5.500 14.500z" />
  </svg>
);
const RulerIcon = () => (
  <svg {...toolStroke}>
    <path d="M4 31 33 5.500h5M12 37l26-23M4 31v5M10.500 26l3.500 3.500M16 21l3.500 3.500M21.500 16l3.500 3.500M27 11l3.500 3.500" />
  </svg>
);
const ZoomIcon = () => (
  <svg {...toolStroke}>
    <circle cx="18.5" cy="19" r="11.5" />
    <path d="M18.500 13.500v11M13 19h11M27 28l5 5" />
  </svg>
);
const MagnetIcon = () => (
  <svg {...toolStroke}>
    <path d="M9.500 33V18a10.500 10.500 0 0 1 21 0v15H24V18a4 4 0 0 0-8 0v15zM9.500 27H16M24 27h6.500" />
  </svg>
);
const PencilLockIcon = () => (
  <svg {...toolStroke}>
    <path d="M5 26l1.500-7L20 5l6 5-13.500 14.500zM6.500 19l6 5.500M17 8l6 5M22 24h12v10H22zM25 24v-3c0-4 6-4 6-.5M28 28v3" />
  </svg>
);
const LockIcon = () => (
  <svg {...toolStroke}>
    <rect x="9.5" y="17" width="21" height="15.5" rx="2" />
    <path d="M15 17v-5c0-6.500 9.500-6.500 9.500 0v1M20 23v4" />
  </svg>
);
const EyeIcon = () => (
  <svg {...toolStroke}>
    <path d="M6 19c4-7 9-12 16-12s12 5 16 12c-4 7-9 12-16 12S10 26 6 19z" />
    <circle cx="22" cy="19" r="5.5" />
    <path d="M29 37c2-1 2-3 4-3s3 2 5 2" strokeWidth={2} />
  </svg>
);
const TrashIcon = () => (
  <svg {...toolStroke}>
    <path d="M8.500 11.500h23M11 11.500V32c0 1.500.5 2 2 2h14c1.500 0 2-.5 2-2V11.500M15 11.500V7h10v4.500M17.500 17v11M22.500 17v11" />
  </svg>
);
const LayersIcon = () => (
  <svg {...toolStroke}>
    <path d="M20 6l12.500 11L20 28 7.500 17zM9.500 22.500 20 31.500l10.500-9M9.500 26.500 20 35.500l10.500-9" />
  </svg>
);
const CalendarIcon = () => (
  <svg className="h-8 w-8" viewBox="0 0 32 32" fill="none" stroke="#d6d8de" strokeWidth="1.7" aria-hidden="true">
    <path d="M3.500 14V7c0-2 1-3 3-3h21c2 0 3 1 3 3v20c0 2-1 3-3 3H17M3.500 11h27M10 1.500v5M23 1.500v5M1 23h13M9 17l6 6-6 6.500" />
  </svg>
);
const SunIcon = () => (
  <svg className="h-7 w-7" viewBox="0 0 28 28" fill="none" stroke="#8c8f97" strokeWidth="1.6" aria-hidden="true">
    <circle cx="14" cy="14" r="8.5" />
    <path d="M14 1.500v4M14 22.500v4M1.500 14h4M22.500 14h4M5 5l3 3M20 20l3 3M5 23l3-3M20 8l3-3" />
  </svg>
);

/* ------------------------------------------------------------------ */
/* Header                                                              */
/* ------------------------------------------------------------------ */

const stats: { label: React.ReactNode; value: React.ReactNode }[] = [
  { label: "Change", value: <span className="text-[#5bb77b]">+17.10%</span> },
  { label: "Index Price", value: "0.015488" },
  { label: "Fair Price", value: "0.015461" },
  {
    label: (
      <>
        Funding Rate <span className="mx-[3px]">/</span> Countdown
      </>
    ),
    value: (
      <>
        <span className="text-[#dd8a33]">+0.0104%</span> <span className="mx-0.5">/</span> 01:48:45
      </>
    ),
  },
  { label: "24h High", value: "0.015636" },
  { label: "24h Low", value: "0.012833" },
  { label: "24h Volume(KOMA)", value: "18.174M" },
  { label: "24h Turnover(USDT)", value: "256.630K" },
  { label: "Open Interest (USDT)", value: "398.025K" },
];

function Header() {
  return (
    <header className="flex h-[91px] shrink-0 items-center bg-[#111216] pr-3.5 pl-[29px]">
      <button aria-label="Add to favourites">
        <Star />
      </button>
      <span className="ml-[15px]">
        <CoinLogo />
      </span>
      <button className="mb-2 ml-3.5 flex items-center gap-3.5 text-[28px] leading-9 font-semibold text-[#f4f5f7]">
        KOMAUSDT Perpetual
        <Caret className="mt-1 h-3 w-[18px]" />
      </button>
      <div className="ml-[29px] h-[70px] w-px bg-[#26282f]" />
      <div className="ml-7 text-[36px] leading-10 font-medium text-[#5bb77b]">0.015455</div>
      <dl className="ml-[30px] flex gap-7 text-[21px] leading-6 whitespace-nowrap">
        {stats.map((s, i) => (
          <div key={i} className="flex min-w-[90px] flex-col gap-3">
            <dt className="text-[#878d99]">{s.label}</dt>
            <dd className="text-[#f4f5f7]">{s.value}</dd>
          </div>
        ))}
      </dl>
      <button aria-label="Layout settings" className="ml-auto text-[#70747e]">
        <Sliders className="h-7 w-7" />
      </button>
    </header>
  );
}

/* ------------------------------------------------------------------ */
/* Chart panel                                                         */
/* ------------------------------------------------------------------ */

const Underline = () => <span className="absolute inset-x-0 bottom-0 h-[3px] bg-white shadow-[0_-4px_8px_rgba(255,255,255,0.45)]" />;

function ChartTabs() {
  return (
    <nav className="flex h-[70px] shrink-0 items-stretch gap-[30px] border-b border-[#24262d] px-7 text-2xl font-medium text-[#878d99]">
      <button className="relative pt-0.5 font-semibold text-white">
        Chart
        <Underline />
      </button>
      <button className="flex items-center gap-[7px] pt-0.5">
        Analysis
        <span className="flex h-6 w-10 items-center justify-center rounded-sm bg-[#b8ddf7] text-[#0c0d10]">
          <AiMark className="h-[18px] w-[27px]" />
        </span>
      </button>
      <button className="pt-0.5">Info</button>
      <button className="pt-0.5">Trading Rules</button>
      <button className="pt-0.5">Risk Limit</button>
      <button aria-label="Alerts" className="ml-auto">
        <Bell />
      </button>
    </nav>
  );
}

const intervals = ["1s", "1m", "5m", "15m", "1H", "4H", "1D"];

function Toolbar() {
  return (
    <div className="flex h-[71px] shrink-0 items-center border-b border-[#24262d] pr-[31px] pl-7 text-[21px] text-[#878d99]">
      <div className="flex gap-2">
        {intervals.map((t) => (
          <button key={t} className={t === "1m" ? "h-[42px] rounded-md bg-[#21232c] px-[15px] font-medium text-white" : "h-[42px] px-[15px]"}>
            {t}
          </button>
        ))}
      </div>
      <button aria-label="More intervals" className="ml-2">
        <Caret className="h-[9px] w-3" />
      </button>
      <div className="ml-3 h-7 w-px bg-[#26282f]" />
      <button aria-label="Candle style" className="ml-[34px] flex items-center gap-3.5">
        <CandlesIcon />
        <Caret className="h-[9px] w-3" />
      </button>
      <div className="ml-8 h-7 w-px bg-[#26282f]" />
      <div className="ml-[31px] flex items-center gap-[31px]">
        <button aria-label="Indicators">
          <FxIcon />
        </button>
        <button aria-label="Speed">
          <GaugeIcon />
        </button>
        <button aria-label="Display items">
          <ListIcon />
        </button>
        <button aria-label="Snapshot">
          <CameraIcon />
        </button>
        <button className="flex items-center gap-1.5">
          Last Price
          <Caret className="h-[9px] w-3" />
        </button>
      </div>
      <div className="ml-auto flex h-[42px] items-center rounded-md bg-[#21232c] px-1 py-1">
        <button className="h-[34px] px-3.5">Original</button>
        <button className="h-[34px] rounded-md bg-[#363748] px-3.5 font-medium text-white">TradingView</button>
        <button className="h-[34px] px-3.5">Depth</button>
      </div>
      <button aria-label="Window layout" className="ml-[30px] text-[#6b6f79]">
        <WindowIcon />
      </button>
      <button aria-label="Full screen" className="ml-9 text-[#6b6f79]">
        <ExpandIcon />
      </button>
    </div>
  );
}

const drawTools: [string, React.FC][] = [
  ["Crosshair", CrossIcon],
  ["Trend line", LineIcon],
  ["Fibonacci", FibIcon],
  ["Brush", BrushIcon],
  ["Text", TextIcon],
  ["Patterns", PatternIcon],
  ["Forecast", ForecastIcon],
  ["Favourites", HeartIcon],
];

function DrawingSidebar() {
  return (
    <aside className="relative ml-3.5 flex w-[98px] shrink-0 flex-col items-center bg-[#16171b] pt-[11px] pr-1.5 text-[#d6d8de]">
      {drawTools.map(([name, Icon]) => (
        <button key={name} aria-label={name} className="flex h-[63px] w-[53px] items-center justify-center">
          <Icon />
        </button>
      ))}
      <div className="mt-[10px] mb-[15px] h-0.5 w-[63px] bg-[#3c3e45]" />
      <button aria-label="Measure" className="flex h-[59px] items-center">
        <RulerIcon />
      </button>
      <button aria-label="Zoom in" className="flex h-[59px] items-center">
        <ZoomIcon />
      </button>
      <div className="mt-[14px] mb-[15px] h-0.5 w-[63px] bg-[#3c3e45]" />
      <button aria-label="Magnet" className="mb-1.5 flex h-[53px] w-[53px] items-center justify-center rounded-md bg-[#3f66fb]">
        <MagnetIcon />
      </button>
      <button aria-label="Lock drawing mode" className="flex h-16 items-center">
        <PencilLockIcon />
      </button>
      <button aria-label="Lock all" className="flex h-16 items-center">
        <LockIcon />
      </button>
      <button aria-label="Hide drawings" className="flex h-16 items-center">
        <EyeIcon />
      </button>
      <div className="mt-[6px] mb-[11px] h-0.5 w-[63px] bg-[#3c3e45]" />
      <button aria-label="Delete" className="flex h-16 items-center">
        <TrashIcon />
      </button>
      <button aria-label="Object tree" className="mt-auto mb-[34px] flex h-16 items-center">
        <LayersIcon />
      </button>
      <button
        aria-label="Collapse toolbar"
        className="absolute right-0.5 bottom-[101px] flex h-[46px] w-3.5 items-center justify-center rounded-md bg-[#3a3d44] text-[#b4b7bf]"
      >
        <svg className="h-4 w-1.5" viewBox="0 0 6 16" fill="none" stroke="currentColor" strokeWidth="1.5" aria-hidden="true">
          <path d="M5 2 1.500 8 5 14" />
        </svg>
      </button>
    </aside>
  );
}

const priceTicks = [
  "0.015800", "0.015600", "0.015400", "0.015200", "0.015000", "0.014799", "0.014599", "0.014399",
  "0.014199", "0.013999", "0.013799", "0.013599", "0.013399", "0.013199", "0.012999",
];

const levelLabels = [
  { x: 1142, y: 803, text: "(0.014253)", tone: "text-[#62ac59]" },
  { x: 1142, y: 844, text: "(0.014116)", tone: "text-[#f5e85a] font-semibold" },
  { x: 1142, y: 881, text: "(0.013995)", tone: "text-[#d94f55]" },
  { x: 2203, y: 551, text: "(0.015078)", tone: "text-[#62ac59]" },
  { x: 2203, y: 641, text: "(0.014784)", tone: "text-[#f5e85a] font-semibold" },
  { x: 2203, y: 720, text: "(0.014521)", tone: "text-[#d94f55]" },
];

const ohlc: [string, string][] = [
  ["O", "0.015474"],
  ["H", "0.015474"],
  ["L", "0.015431"],
  ["C", "0.015455"],
];

function Plot() {
  return (
    <div className="relative min-w-0 flex-1 overflow-hidden">
      <ChartDrawing />
      {levelLabels.map((l) => (
        <span
          key={l.text}
          className={`absolute -translate-y-1/2 text-xl leading-6 ${l.tone}`}
          style={{ left: leftPct(l.x), top: topPct(l.y) }}
        >
          {l.text}
        </span>
      ))}
      <div className="absolute top-2.5 left-[11px] flex flex-col items-start text-[21px] whitespace-nowrap text-[#8d9097]">
        <div className="flex items-center gap-7 bg-[#111216]/50 pr-2 pl-1">
          <span className="text-[26px] leading-[38px]">KOMAUSDT Perpetual Last Price · 1 · MEXC</span>
          <span className="flex gap-[9px] text-[22px] text-[#e5555f]">
            {ohlc.map(([k, v]) => (
              <span key={k}>
                <span className="text-[#8d9097]">{k}</span>
                {v}
              </span>
            ))}
            <span>-0.000018 (−0.12%)</span>
          </span>
        </div>
        <div className="mt-1 flex gap-6 bg-[#111216]/50 pr-2 pl-1 leading-9">
          <span>EMA 200 close 0 SMA 9</span>
          <span className="font-semibold text-[#f5e85a]">0.014777</span>
        </div>
      </div>
      <div
        className="absolute left-[11px] flex -translate-y-1/2 gap-6 bg-[#111216]/50 pr-2 pl-1 text-[21px] leading-9 whitespace-nowrap text-[#8d9097]"
        style={{ top: topPct(1246) }}
      >
        <span>RSI 14 SMA 14</span>
        <span className="text-[#5fb5d5]">68.32</span>
      </div>
      <div className="absolute bottom-2.5 left-3 flex h-[58px] w-[58px] items-center justify-center rounded-full border-2 border-[#2b3039] bg-[#151c24]">
        <svg className="h-5 w-[38px]" viewBox="0 0 38 20" fill="#f4f5f7" aria-hidden="true">
          <path d="M0 0h17v20H9V8H0zM29 0h9l-8.500 20H20.500z" />
          <circle cx="22.5" cy="4" r="4" />
        </svg>
      </div>
      <button
        aria-label="Quick trade"
        className="absolute bottom-2.5 flex h-[49px] w-[49px] items-center justify-center rounded-full bg-[#262b30]"
        style={{ left: leftPct(2284) }}
      >
        <svg className="h-[18px] w-3.5" viewBox="0 0 14 18" fill="#fff" aria-hidden="true">
          <path d="M8.500 0h2L8.500 6.500H14L6 18H4l2-7H0z" />
        </svg>
      </button>
    </div>
  );
}

function PriceAxis() {
  return (
    <div className="relative w-[123px] shrink-0 border-l border-[#1f2127] text-xl leading-6 text-[#9a9da5]">
      {priceTicks.map((p, i) => (
        <span key={p} className="absolute left-[17px] -translate-y-1/2" style={{ top: topPct(gridY[i] + 1) }}>
          {p}
        </span>
      ))}
      <span className="absolute left-[17px] -translate-y-1/2" style={{ top: topPct(1256) }}>
        80.00
      </span>
      <span className="absolute left-[17px] -translate-y-1/2" style={{ top: topPct(1325) }}>
        40.00
      </span>
      <div className="absolute inset-x-0 h-0.5 bg-[#26282e]" style={{ top: topPct(1215) }} />
      <span
        className="absolute -left-px flex h-[31px] w-[114px] -translate-y-1/2 items-center rounded-r-sm bg-[#e5555f] pl-[18px] font-semibold text-white"
        style={{ top: topPct(454.5) }}
      >
        0.015455
      </span>
      <span
        className="absolute -left-px flex h-[31px] w-[114px] -translate-y-1/2 items-center rounded-r-sm bg-[#f9ec59] pl-[18px] font-medium text-black"
        style={{ top: topPct(660.5) }}
      >
        0.014777
      </span>
      <span
        className="absolute -left-px flex h-[31px] w-[81px] -translate-y-1/2 items-center rounded-r-sm bg-[#5fb8d6] pl-[18px] text-black"
        style={{ top: topPct(1275.5) }}
      >
        68.32
      </span>
    </div>
  );
}

const timeTicks: [number, string][] = [
  [330, "18:00:00"],
  [571, "19:00:00"],
  [813, "20:00:00"],
  [1538, "23:00:00"],
  [1780, "30"],
  [2022, "01:00:00"],
  [2405, "02:35:00"],
];

const timeMarks: [number, string, string][] = [
  [173, "2026-08-29", "17:21:00"],
  [1127, "2026-08-29", "21:18:00"],
  [1301, "2026-08-29", "22:01:00"],
  [2187, "2026-08-30", "01:41:00"],
];

function TimeAxis() {
  return (
    <div className="flex h-12 shrink-0 border-t border-[#1f2127] text-xl leading-6">
      <div className="relative min-w-0 flex-1 overflow-hidden text-[#9a9da5]">
        {timeTicks.map(([x, t]) => (
          <span key={t} className="absolute top-3 -translate-x-1/2" style={{ left: leftPct(x) }}>
            {t}
          </span>
        ))}
        {timeMarks.map(([x, d, t]) => (
          <span
            key={d + t}
            className="absolute top-0 flex h-[42px] w-[237px] -translate-x-1/2 items-center justify-center gap-5 rounded-b-sm bg-[#f9ec59] pt-1.5 whitespace-nowrap text-black"
            style={{ left: leftPct(x) }}
          >
            <span>{d}</span>
            <span>{t}</span>
          </span>
        ))}
      </div>
      <div className="flex w-[123px] items-center justify-center border-l border-[#1f2127]">
        <button aria-label="Scale settings">
          <SunIcon />
        </button>
      </div>
    </div>
  );
}

function BottomBar() {
  return (
    <div className="flex h-[68px] shrink-0 items-center bg-[#16171b] pt-0.5 pr-[17px] pl-7 text-2xl text-[#d6d8de]">
      <button aria-label="Go to date">
        <CalendarIcon />
      </button>
      <button className="ml-auto">01:11:15 (UTC+7)</button>
      <div className="ml-[30px] h-[39px] w-0.5 bg-[#45474e]" />
      <button className="ml-[23px]">%</button>
      <button className="ml-[26px]">log</button>
      <button className="ml-6 text-[#4464f5]">Auto</button>
    </div>
  );
}

function ChartPanel() {
  return (
    <section className="flex min-w-0 flex-1 flex-col bg-[#111216]">
      <ChartTabs />
      <div className="flex h-16 shrink-0 items-center gap-3 border-b border-[#24262d] px-[30px] text-[21px] font-semibold text-[#f4f5f7]">
        <AiMark className="h-5 w-[31px]" />
        <span>Is KOMA trending up, down, or ranging?</span>
      </div>
      <Toolbar />
      <div className="flex min-h-0 flex-1">
        <DrawingSidebar />
        <div className="flex min-w-0 flex-1 flex-col font-['Noto_Sans',sans-serif]">
          <div className="flex min-h-0 flex-1">
            <Plot />
            <PriceAxis />
          </div>
          <TimeAxis />
          <BottomBar />
        </div>
      </div>
    </section>
  );
}

/* ------------------------------------------------------------------ */
/* Order book                                                          */
/* ------------------------------------------------------------------ */

type Level = [string, string, string, number];

const asks: Level[] = [
  ["0.01563", "18.554K", "173.600K", 173600],
  ["0.01562", "18.542K", "155.046K", 155046],
  ["0.01560", "18.518K", "136.504K", 136504],
  ["0.01559", "18.506K", "117.986K", 117986],
  ["0.01558", "18.152K", "99.479K", 99479],
  ["0.01556", "18.128K", "81.328K", 81328],
  ["0.01555", "18.117K", "63.199K", 63199],
  ["0.01554", "18.105K", "45.083K", 45083],
  ["0.01552", "19.969K", "26.978K", 26978],
  ["0.01551", "1.397K", "7.009K", 7009],
  ["0.01550", "2.719K", "5.611K", 5611],
  ["0.01549", "1.756K", "2.892K", 2892],
  ["0.01548", "645.36", "1.136K", 1136],
  ["0.01547", "490.70", "490.70", 490],
];

const bids: Level[] = [
  ["0.01544", "235.92", "235.92", 235],
  ["0.01543", "357.66", "593.59", 593],
  ["0.01542", "1.829K", "2.423K", 2423],
  ["0.01541", "6.408K", "8.831K", 8831],
  ["0.01540", "3.188K", "12.019K", 12019],
  ["0.01539", "2.326K", "14.346K", 14346],
  ["0.01537", "19.416K", "33.762K", 33762],
  ["0.01536", "19.946K", "53.707K", 53707],
  ["0.01535", "18.049K", "71.756K", 71756],
  ["0.01533", "18.025K", "89.782K", 89782],
  ["0.01532", "18.014K", "107.795K", 107795],
  ["0.01531", "18.342K", "126.137K", 126137],
  ["0.01529", "18.318K", "144.455K", 144455],
  ["0.01528", "18.306K", "162.761K", 162761],
];

function Book({ label, levels, max, color, tone }: { label: string; levels: Level[]; max: number; color: string; tone: string }) {
  return (
    <div className="min-h-0 flex-1">
      <table aria-label={label} className="h-full w-full table-fixed border-separate border-spacing-x-0 border-spacing-y-[2px] text-[21px] leading-6 text-[#f0f1f4]">
        <tbody>
          {levels.map(([price, qty, total, depth]) => {
            const w = (depth / max) * 100;
            return (
              <tr key={price} style={{ backgroundImage: `linear-gradient(to left, ${color} ${w}%, transparent ${w}%)` }}>
                <td className={`w-[30%] p-0 ${tone}`}>{price}</td>
                <td className="w-[31%] p-0 text-right">{qty}</td>
                <td className="p-0 text-right">{total}</td>
              </tr>
            );
          })}
        </tbody>
      </table>
    </div>
  );
}

const BookIcon = ({ colors, widths }: { colors: string[]; widths: number[] }) => (
  <svg className="h-6 w-[26px]" viewBox="0 0 26 24" aria-hidden="true">
    {colors.map((c, i) => (
      <rect key={i} x="0" y={i * 6.5} width={widths[i]} height="3" fill={c} />
    ))}
  </svg>
);

const RED = "#e5555f";
const GREEN = "#5bb77b";

function OrderBook() {
  return (
    <section className="flex w-[619px] shrink-0 flex-col bg-[#111216]">
      <nav className="flex h-[70px] shrink-0 items-stretch border-b border-[#24262d] pr-[15px] pl-7 text-[25px] font-medium whitespace-nowrap text-[#878d99]">
        <button className="relative pt-0.5 font-semibold text-white">
          Order Book
          <Underline />
        </button>
        <button className="ml-[38px] pt-0.5">Market Trades</button>
        <button className="ml-[38px] w-[60px] overflow-hidden bg-linear-to-r from-[#878d99] from-50% to-[#111216] bg-clip-text pt-0.5 text-left text-transparent">
          Mark
        </button>
        <button aria-label="More tabs" className="ml-4">
          <svg className="h-6 w-3.5" viewBox="0 0 14 24" fill="none" stroke="currentColor" strokeWidth="2" aria-hidden="true">
            <path d="M1.500 1.500 12.500 12l-11 10.500" />
          </svg>
        </button>
        <button aria-label="Detach panel" className="ml-auto text-[#6b6f79]">
          <svg className="h-[22px] w-[22px]" viewBox="0 0 22 22" fill="none" stroke="currentColor" strokeWidth="1.7" aria-hidden="true">
            <path d="M21 9V3a2 2 0 0 0-2-2H3a2 2 0 0 0-2 2v16a2 2 0 0 0 2 2h7M14.500 13.500H21V21h-6.500zM6 5.500l5 5M11 6v4.500H6.500" />
          </svg>
        </button>
        <button aria-label="Panel settings" className="ml-[18px] text-[#6b6f79]">
          <Sliders className="h-6 w-6" />
        </button>
      </nav>
      <div className="flex min-h-0 flex-1 flex-col pr-4 pl-7">
        <div className="mt-7 flex h-[42px] shrink-0 items-center">
          <button aria-label="Asks and bids" className="flex h-[42px] w-[42px] items-center justify-center rounded-sm bg-[#21232c]">
            <BookIcon colors={[RED, RED, GREEN, GREEN]} widths={[26, 20, 20, 26]} />
          </button>
          <button aria-label="Bids only" className="ml-[22px]">
            <BookIcon colors={[GREEN, GREEN, GREEN, GREEN]} widths={[20, 20, 20, 26]} />
          </button>
          <button aria-label="Asks only" className="ml-[30px]">
            <BookIcon colors={[RED, RED, RED, RED]} widths={[26, 20, 20, 20]} />
          </button>
          <div className="relative ml-auto">
            <select
              aria-label="Price step"
              className="h-[42px] w-[126px] appearance-none rounded-xl bg-[#21232c] pl-3.5 text-xl font-medium text-white"
            >
              <option>0.00001</option>
            </select>
            <Caret className="pointer-events-none absolute top-4 right-2.5 h-2.5 w-3.5 text-[#878d99]" />
          </div>
        </div>
        <div className="mt-5 flex h-6 shrink-0 items-center text-[21px] leading-6 text-[#878d99]">
          <span className="w-[30%]">Price(USDT)</span>
          <span className="w-[31%] text-right">Quantity(USDT)</span>
          <span className="flex-1 text-right">Total(USDT)</span>
        </div>
        <div className="mt-[15px] flex min-h-0 flex-1 flex-col">
          <Book label="Asks" levels={asks} max={173600} color="#2f1c21" tone="text-[#e5555f]" />
          <div className="flex h-[52px] shrink-0 items-center gap-2">
            <span className="text-[33px] leading-10 font-semibold text-[#5bb77b]">0.015455</span>
            <svg className="h-5 w-4" viewBox="0 0 16 20" fill="none" stroke="#5bb77b" strokeWidth="2.2" aria-hidden="true">
              <path d="M8 19V2M2 8l6-6 6 6" />
            </svg>
            <span className="ml-1.5 border-b border-dashed border-[#4a4d56] text-[21px] leading-6 text-[#878d99]">0.015461</span>
          </div>
          <Book label="Bids" levels={bids} max={170800} color="#1d2726" tone="text-[#5bb77b]" />
        </div>
        <div className="mt-5 mb-7 flex h-[35px] shrink-0 text-[21px] font-medium text-[#f0f1f4]">
          <div className="flex w-[33px] items-center justify-center rounded-l-sm border-2 border-[#20302a]">B</div>
          <div className="flex flex-1 items-center bg-[#20302a] pl-[76px] [clip-path:polygon(0_0,calc(100%-6px)_0,100%_100%,0_100%)]">49.1%</div>
          <div className="flex flex-1 items-center justify-end bg-[#3e1d24] pr-[83px] [clip-path:polygon(1px_0,100%_0,100%_100%,7px_100%)]">50.9%</div>
          <div className="flex w-[33px] items-center justify-center rounded-r-sm border-2 border-[#3e1d24]">S</div>
        </div>
      </div>
    </section>
  );
}

export default function App() {
  return (
    <div className="relative flex h-screen min-h-[1200px] flex-col gap-[7px] overflow-hidden bg-black pt-1.5 pb-0.5 pl-[7px] font-['Inter',sans-serif]">
      <Header />
      <main className="flex min-h-0 flex-1 gap-[7px]">
        <ChartPanel />
        <OrderBook />
      </main>
      <div className="absolute right-2 bottom-2 flex items-center gap-1.5 font-['Noto_Sans',sans-serif] text-2xl text-[#dcdde0]">
        <svg className="h-[27px] w-[27px]" viewBox="0 0 27 27" fill="currentColor" aria-hidden="true">
          <path d="M13.500 0l7 7-2.800 2.800-4.200-4.200-4.200 4.200L6.500 7zM13.500 27l-7-7 2.800-2.800 4.200 4.200 4.200-4.200 2.800 2.800zM2.800 10.700l2.800 2.800-2.800 2.800L0 13.500zM24.200 10.700l2.800 2.800-2.800 2.800-2.800-2.800zM13.500 10.700l2.800 2.800-2.800 2.800-2.800-2.800z" />
        </svg>
        <span>@ ScalpingX</span>
      </div>
    </div>
  );
}
